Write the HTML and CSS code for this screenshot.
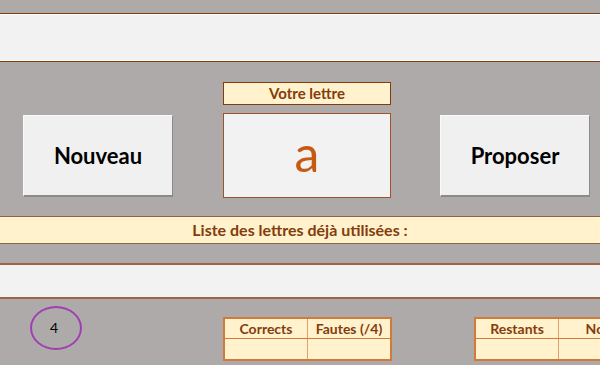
FILE: index.html
```html
<!DOCTYPE html>
<html lang="fr">
<head>
  <meta charset="UTF-8">
  <title>Jeu du pendu</title>
  <link rel="stylesheet" href="styles.css">
</head>
<body>
  <!-- bandeau du mot à trouver -->
  <div class="band band-word"></div>

  <div class="game">
    <div class="label">Votre lettre</div>
    <div class="row">
      <button class="btn">Nouveau</button>
      <div class="letter">a</div>
      <button class="btn">Proposer</button>
    </div>
  </div>

  <div class="band-title">Liste des lettres déjà utilisées :</div>
  <div class="band band-used"></div>

  <div class="bottom">
    <div class="counter">4</div>
    <table class="score">
      <tr><th>Corrects</th><th>Fautes (/4)</th></tr>
      <tr><td></td><td></td></tr>
    </table>
    <table class="score score-right">
      <tr><th>Restants</th><th class="wide">Nombre</th></tr>
      <tr><td></td><td></td></tr>
    </table>
  </div>
</body>
</html>
```

FILE: styles.css
```css
/* feuille type tableur */
body {
  margin: 0;
  width: 600px;
  height: 365px;
  overflow: hidden;
  background-color: #aeaaaa;
  font-family: "Lato", "Open Sans", sans-serif;
}

.band {
  background-color: #f2f2f2;
}

/* bandeau du haut */
.band-word {
  margin-top: 13px;
  height: 47px;
  border-top: 1px solid #843c0c;
  border-bottom: 1px solid #843c0c;
  box-shadow: inset 0 1px 0 #fff, inset 0 -1px 0 #fff;
}

.game {
  padding-top: 20px;
}

.label {
  margin-left: 223px;
  width: 166px;
  height: 21px;
  line-height: 21px;
  background-color: #fff2cc;
  border: 1px solid #843c0c;
  color: #843c0c;
  font-weight: bold;
  font-size: 15px;
  text-align: center;
}

.row {
  display: flex;
  align-items: center;
  gap: 50px;
  margin-top: 8px;
  padding-left: 23px;
}

.btn {
  width: 150px;
  height: 82px;
  background-color: #f0f0f0;
  border: 1px solid #fafafa;
  border-right-color: #8a8a8a;
  border-bottom: 2px solid #8a8a8a;
  font-family: inherit;
  font-size: 22px;
  font-weight: bold;
  color: #000;
  padding: 0;
}

.letter {
  width: 166px;
  height: 83px;
  margin-right: -1px;
  background-color: #f2f2f2;
  border: 1px solid #a0522d;
  color: #c55a11;
  font-size: 50px;
  line-height: 78px;
  text-align: center;
}

.band-title {
  margin-top: 18px;
  height: 26px;
  line-height: 26px;
  background-color: #fff2cc;
  border-top: 1px solid #9a5f3a;
  border-bottom: 1px solid #9a5f3a;
  color: #843c0c;
  font-weight: bold;
  font-size: 16px;
  text-align: center;
}

.band-used {
  margin-top: 19px;
  height: 32px;
  border-top: 2px solid #9c6440;
  border-bottom: 2px solid #9c6440;
}

.bottom {
  display: flex;
  align-items: flex-start;
  padding-left: 30px;
}

.counter {
  flex-shrink: 0;
  margin-top: 7px;
  width: 48px;
  height: 40px;
  border: 2px solid #a040b0;
  border-radius: 50%;
  font-size: 14px;
  line-height: 40px;
  text-align: center;
  color: #000;
  text-indent: -4px;
}

.score {
  flex-shrink: 0;
  table-layout: fixed;
  margin-top: 18px;
  margin-left: 141px;
  border-collapse: collapse;
  background-color: #fff2cc;
  border: 2px solid #d27a3c;
}

.score th,
.score td {
  border: 1px solid #e0a070;
  width: 82px;
  padding: 0;
  text-align: center;
  white-space: nowrap;
}

.score th {
  height: 19px;
  border-bottom: 1px solid #d27a3c;
  color: #843c0c;
  font-size: 14px;
  font-weight: bold;
}

.score td {
  height: 20px;
}

.score-right {
  margin-left: 82px;
}

.score .wide {
  width: 104px;
}
```
